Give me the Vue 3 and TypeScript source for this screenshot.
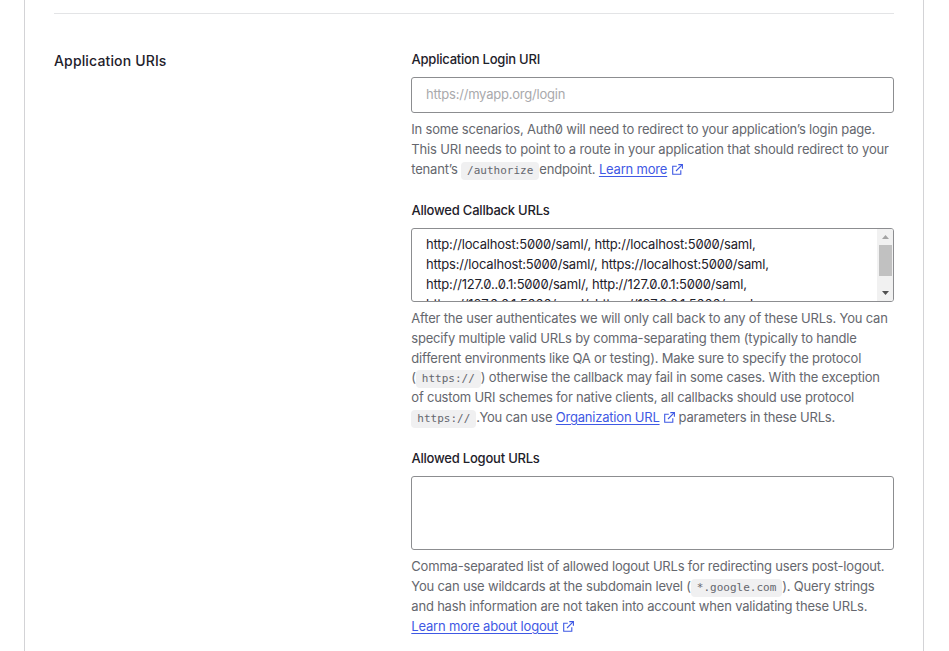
<script setup lang="ts">
import { h, type FunctionalComponent } from 'vue'

const callbackUrls: string[] = [
  'http://localhost:5000/saml/, http://localhost:5000/saml,',
  'https://localhost:5000/saml/, https://localhost:5000/saml,',
  'http://127.0..0.1:5000/saml/, http://127.0.0.1:5000/saml,',
  'https://127.0.0.1:5000/saml/, https://127.0.0.1:5000/saml,',
]

const ExternalIcon: FunctionalComponent = () =>
  h('svg', { width: 11, height: 11, viewBox: '0 0 11 11', fill: 'none', stroke: 'currentColor', 'stroke-width': 1.1 }, [
    h('path', { d: 'M4.8 2.2H0.7V10.3H8.8V6.2' }),
    h('path', { d: 'M6.3 0.6H10.4V4.7' }),
    h('path', { d: 'M10.3 0.7L4 7' }),
  ])
</script>

<template>
  <main class="panel">
    <section class="section">
      <h2 class="title">Application URIs</h2>
      <div class="fields">
        <div class="field">
          <label class="label" for="login-uri">Application Login URI</label>
          <input id="login-uri" class="control" type="text" placeholder="https://myapp.org/login" />
          <p class="help">
            <span class="line">In some scenarios, Auth0 will need to redirect to your application’s login page.</span>
            <span class="line loose">This URI needs to point to a route in your application that should redirect to your</span>
            <span class="line">tenant’s <code>/authorize</code>endpoint. <a>Learn more</a><ExternalIcon class="icon" /></span>
          </p>
        </div>

        <div class="field">
          <div class="label">Allowed Callback URLs</div>
          <div class="control area">
            <div class="area-text">
              <span v-for="url in callbackUrls" :key="url" class="area-line">{{ url }}</span>
            </div>
            <div class="scrollbar">
              <svg class="arrow up" width="7" height="4" viewBox="0 0 7 4"><path d="M0 4L3.5 0L7 4Z" /></svg>
              <div class="thumb"></div>
              <svg class="arrow down" width="7" height="4" viewBox="0 0 7 4"><path d="M0 0L3.5 4L7 0Z" /></svg>
            </div>
          </div>
          <p class="help">
            <span class="line">After the user authenticates we will only call back to any of these URLs. You can</span>
            <span class="line">specify multiple valid URLs by comma-separating them (typically to handle</span>
            <span class="line">different environments like QA or testing). Make sure to specify the protocol</span>
            <span class="line">(<code>https://</code>) otherwise the callback may fail in some cases. With the exception</span>
            <span class="line tight">of custom URI schemes for native clients, all callbacks should use protocol</span>
            <span class="line tight"><code>https://</code>.You can use <a>Organization URL</a><ExternalIcon class="icon" /> parameters in these URLs.</span>
          </p>
        </div>

        <div class="field">
          <div class="label">Allowed Logout URLs</div>
          <div class="control area"></div>
          <p class="help">
            <span class="line">Comma-separated list of allowed logout URLs for redirecting users post-logout.</span>
            <span class="line">You can use wildcards at the subdomain level (<code>*.google.com</code>). Query strings</span>
            <span class="line">and hash information are not taken into account when validating these URLs.</span>
            <span class="line"><a>Learn more about logout</a><ExternalIcon class="icon" /></span>
          </p>
        </div>
      </div>
    </section>
  </main>
</template>

<style>
body {
  background: #fff;
  overflow: hidden;
}
</style>

<style scoped>
.panel {
  box-sizing: border-box;
  width: 900px;
  height: 651px;
  margin-left: 24px;
  padding: 13px 29px 0;
  border: solid #d3d3d6;
  border-width: 0 1px;
  overflow: hidden;
  font-family: Inter, sans-serif;
  font-size: 13px;
  font-feature-settings: 'zero';
  letter-spacing: -0.18px;
  color: #1e212a;
}
.section {
  display: grid;
  grid-template-columns: 357px 483px;
  padding-top: 35px;
  border-top: 1px solid #e3e4e6;
}
.title {
  margin: 2px 0 0;
  font-size: 14px;
  font-weight: 500;
  line-height: 20px;
  letter-spacing: 0.15px;
}
.fields {
  display: flex;
  flex-direction: column;
  gap: 20.6px;
}
.label {
  display: block;
  margin-bottom: 8px;
  padding-left: 0.5px;
  font-weight: 500;
  line-height: 20px;
  letter-spacing: -0.22px;
  white-space: nowrap;
}
.control {
  display: block;
  box-sizing: border-box;
  width: 100%;
  height: 36px;
  padding: 0 14px 2px;
  border: 1px solid #8c8d90;
  border-radius: 3px;
  outline: none;
  background: #fff;
  color: inherit;
  font: inherit;
  font-feature-settings: inherit;
  letter-spacing: inherit;
}
.control::placeholder {
  color: #a9a9ac;
  letter-spacing: -0.21px;
  opacity: 1;
}
.area {
  display: flex;
  justify-content: space-between;
  height: 74px;
  padding: 0 0 0 14px;
  overflow: hidden;
}
.area-text {
  box-sizing: border-box;
  height: 72px;
  padding-top: 5px;
  overflow: hidden;
}
.area-line,
.line {
  display: block;
  height: 20px;
  line-height: 20px;
  white-space: nowrap;
}
.scrollbar {
  display: flex;
  flex-direction: column;
  align-items: center;
  width: 16px;
  height: 72px;
  background: #f1f1f1;
}
.arrow {
  flex: none;
}
.up {
  margin: 6px 0;
  fill: #a3a3a3;
}
.thumb {
  width: 13px;
  height: 31px;
  background: #c1c1c1;
}
.down {
  margin-top: 15px;
  fill: #505050;
}
.help {
  margin: 7px 0 0;
  padding-left: 0.3px;
  color: #65676e;
}
.help .line {
  height: 19.8px;
  line-height: 19.8px;
  letter-spacing: -0.192px;
}
.help .loose {
  letter-spacing: -0.16px;
}
.help .tight {
  letter-spacing: -0.21px;
}
.help code {
  display: inline-block;
  height: 18px;
  padding: 0 6px;
  border-radius: 4px;
  background: #f0f0f1;
  font-family: 'DejaVu Sans Mono', monospace;
  font-size: 11px;
  letter-spacing: 0;
  line-height: 18px;
}
a {
  color: #3f59e4;
  text-decoration: underline;
  text-underline-offset: 2px;
}
.icon {
  margin-left: 4.5px;
  color: #3f59e4;
  vertical-align: -1px;
}
</style>
